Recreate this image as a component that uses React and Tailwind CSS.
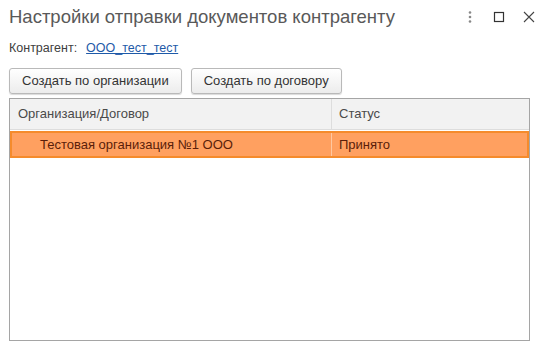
import React from "react";

function TitleIcons() {
  return (
    <div className="flex items-center gap-[18px] pr-[12px] text-[#444]">
      <svg width="10" height="14" viewBox="0 0 10 14">
        <circle cx="5" cy="2.5" r="1.3" fill="#888" />
        <circle cx="5" cy="7" r="1.3" fill="#888" />
        <circle cx="5" cy="11.5" r="1.3" fill="#888" />
      </svg>
      <svg width="12" height="12" viewBox="0 0 12 12">
        <rect x="1.5" y="1.5" width="9" height="9" fill="none" stroke="#333" strokeWidth="1.2" />
      </svg>
      <svg width="12" height="12" viewBox="0 0 12 12">
        <path d="M1 1 L11 11 M11 1 L1 11" stroke="#444" strokeWidth="1.1" />
      </svg>
    </div>
  );
}

function Button({ children }) {
  return (
    <button className="h-[26px] px-[12px] rounded-[3px] border border-[#b9b9b9] bg-gradient-to-b from-white to-[#ececec] text-[13px] text-[#333] shadow-[0_1px_1px_rgba(0,0,0,0.15)]">
      {children}
    </button>
  );
}

export default function App() {
  const rows = [{ org: "Тестовая организация №1 ООО", status: "Принято" }];

  return (
    <div
      className="w-[547px] h-[350px] bg-white flex flex-col overflow-hidden"
      style={{ fontFamily: '"Liberation Sans", Arial, sans-serif' }}
    >
      <div className="h-[34px] flex items-center justify-between pl-[9px]">
        <h1 className="text-[18.5px] text-[#595959] leading-none">
          Настройки отправки документов контрагенту
        </h1>
        <TitleIcons />
      </div>

      <div className="h-[28px] flex items-center pl-[9px] text-[12.5px] text-[#404040]">
        <span>Контрагент:</span>
        <a href="#" className="ml-[9px] text-[#1e5aa8] underline">
          ООО_тест_тест
        </a>
      </div>

      <div className="flex gap-[9px] pl-[9px] mt-[6px]">
        <Button>Создать по организации</Button>
        <Button>Создать по договору</Button>
      </div>

      <div className="ml-[9px] mt-[4px] w-[521px] h-[243px] border border-[#a5a5a5] bg-white">
        <div className="flex h-[31px] bg-[#f2f2f2] border-b border-[#dddddd] text-[13px] text-[#4a4a4a]">
          <div className="w-[322px] border-r border-[#dddddd] flex items-center pl-[8px]">
            Организация/Договор
          </div>
          <div className="flex-1 flex items-center pl-[7px]">Статус</div>
        </div>
        {rows.map((r) => (
          <div
            key={r.org}
            className="mt-[1px] flex h-[27px] bg-[#ffa060] border-2 border-[#f58b2c] text-[13px] text-[#5a1e0a]"
          >
            <div className="w-[320px] border-r border-[#ffc8a0] flex items-center pl-[28px]">
              {r.org}
            </div>
            <div className="flex-1 flex items-center pl-[7px]">{r.status}</div>
          </div>
        ))}
      </div>
    </div>
  );
}
